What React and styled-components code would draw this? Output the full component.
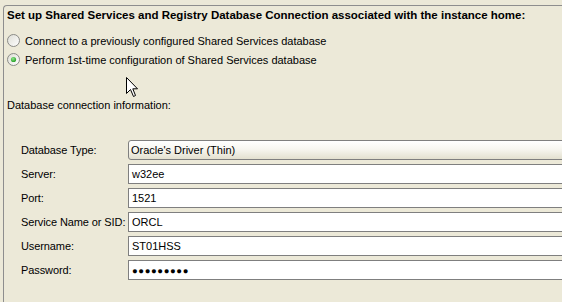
import React from "react";
import styled, { createGlobalStyle } from "styled-components";

const GlobalStyle = createGlobalStyle`
  html, body {
    margin: 0;
    background: #ece9d8;
    overflow: hidden;
  }
  body {
    font-family: "Liberation Sans", Arial, sans-serif;
    font-size: 11px;
    color: #000000;
  }
`;

const Page = styled.div`
  position: relative;
  width: 562px;
  height: 302px;
  overflow: hidden;
`;

const GroupFrame = styled.div`
  margin: 5px 0 0 3px;
  width: 640px;
  height: 320px;
  border-top: 1px solid #8e8e8e;
  border-left: 1px solid #8e8e8e;
  border-top-left-radius: 4px;
  padding-left: 3px;
`;

const Heading = styled.div`
  margin-top: 3px;
  height: 13px;
  line-height: 13px;
  font-size: 11.5px;
  font-weight: bold;
  white-space: nowrap;
`;

const RadioList = styled.div`
  margin-top: 9px;
  display: flex;
  flex-direction: column;
`;

const RadioRow = styled.label`
  display: flex;
  align-items: center;
  gap: 5px;
  height: 19px;
  white-space: nowrap;
`;

const InfoLabel = styled.div`
  margin-top: 30px;
  height: 13px;
  line-height: 13px;
`;

const FieldGrid = styled.div`
  margin-top: 28px;
  padding-left: 14px;
  display: grid;
  grid-template-columns: 107px 1fr;
  grid-auto-rows: 20px;
  row-gap: 4px;
  align-items: center;
`;

const FieldLabel = styled.div`
  white-space: nowrap;
  letter-spacing: -0.1px;
`;

const TextBox = styled.div`
  box-sizing: border-box;
  height: 20px;
  display: flex;
  align-items: center;
  padding-left: 3px;
  border: 1px solid #7f7f7f;
  background: #ffffff;
  white-space: nowrap;
  font-size: ${(p) => (p.$secret ? "9.5px" : "11px")};
  letter-spacing: ${(p) => (p.$secret ? "0.6px" : "0")};
`;

const ComboBox = styled(TextBox)`
  border-radius: 3px;
  background: linear-gradient(#ffffff 0%, #f7f6f0 45%, #e3e0cf 100%);
  padding-left: 2px;
`;

const Pointer = styled.svg`
  position: absolute;
  left: 126px;
  top: 77px;
`;

const RadioIcon = ({ checked }) => (
  <svg width="13" height="13" viewBox="0 0 13 13">
    <defs>
      <linearGradient id={checked ? "rgOn" : "rgOff"} x1="0" y1="0" x2="1" y2="1">
        <stop offset="0" stopColor="#dcdcd4" />
        <stop offset="1" stopColor="#ffffff" />
      </linearGradient>
      <radialGradient id="dotG" cx="0.4" cy="0.35" r="0.7">
        <stop offset="0" stopColor="#8ee68a" />
        <stop offset="1" stopColor="#1f9a1f" />
      </radialGradient>
    </defs>
    <circle
      cx="6.5"
      cy="6.5"
      r="6"
      fill={`url(#${checked ? "rgOn" : "rgOff"})`}
      stroke="#8a8a86"
      strokeWidth="1"
    />
    {checked && <circle cx="6.5" cy="6.5" r="2.6" fill="url(#dotG)" />}
  </svg>
);

const fields = [
  { label: "Database Type:", value: "Oracle's Driver (Thin)", combo: true },
  { label: "Server:", value: "w32ee" },
  { label: "Port:", value: "1521" },
  { label: "Service Name or SID:", value: "ORCL" },
  { label: "Username:", value: "ST01HSS" },
  { label: "Password:", value: "●●●●●●●●●", secret: true },
];

export default function App() {
  return (
    <Page>
      <GlobalStyle />
      <GroupFrame>
        <Heading>
          Set up Shared Services and Registry Database Connection associated with the instance home:
        </Heading>
        <RadioList>
          <RadioRow>
            <RadioIcon />
            Connect to a previously configured Shared Services database
          </RadioRow>
          <RadioRow>
            <RadioIcon checked />
            Perform 1st-time configuration of Shared Services database
          </RadioRow>
        </RadioList>
        <InfoLabel>Database connection information:</InfoLabel>
        <FieldGrid>
          {fields.map((f) => (
            <React.Fragment key={f.label}>
              <FieldLabel>{f.label}</FieldLabel>
              {f.combo ? (
                <ComboBox>{f.value}</ComboBox>
              ) : (
                <TextBox $secret={f.secret}>{f.value}</TextBox>
              )}
            </React.Fragment>
          ))}
        </FieldGrid>
      </GroupFrame>
      <Pointer width="13" height="21" viewBox="0 0 13 21">
        <path
          d="M0.5 0.5 L0.5 16.5 L4.5 12.5 L7.5 19.5 L9.5 18.5 L6.8 11.8 L11.5 11.8 Z"
          fill="#ffffff"
          stroke="#000000"
          strokeWidth="1"
          strokeLinejoin="miter"
        />
      </Pointer>
    </Page>
  );
}
